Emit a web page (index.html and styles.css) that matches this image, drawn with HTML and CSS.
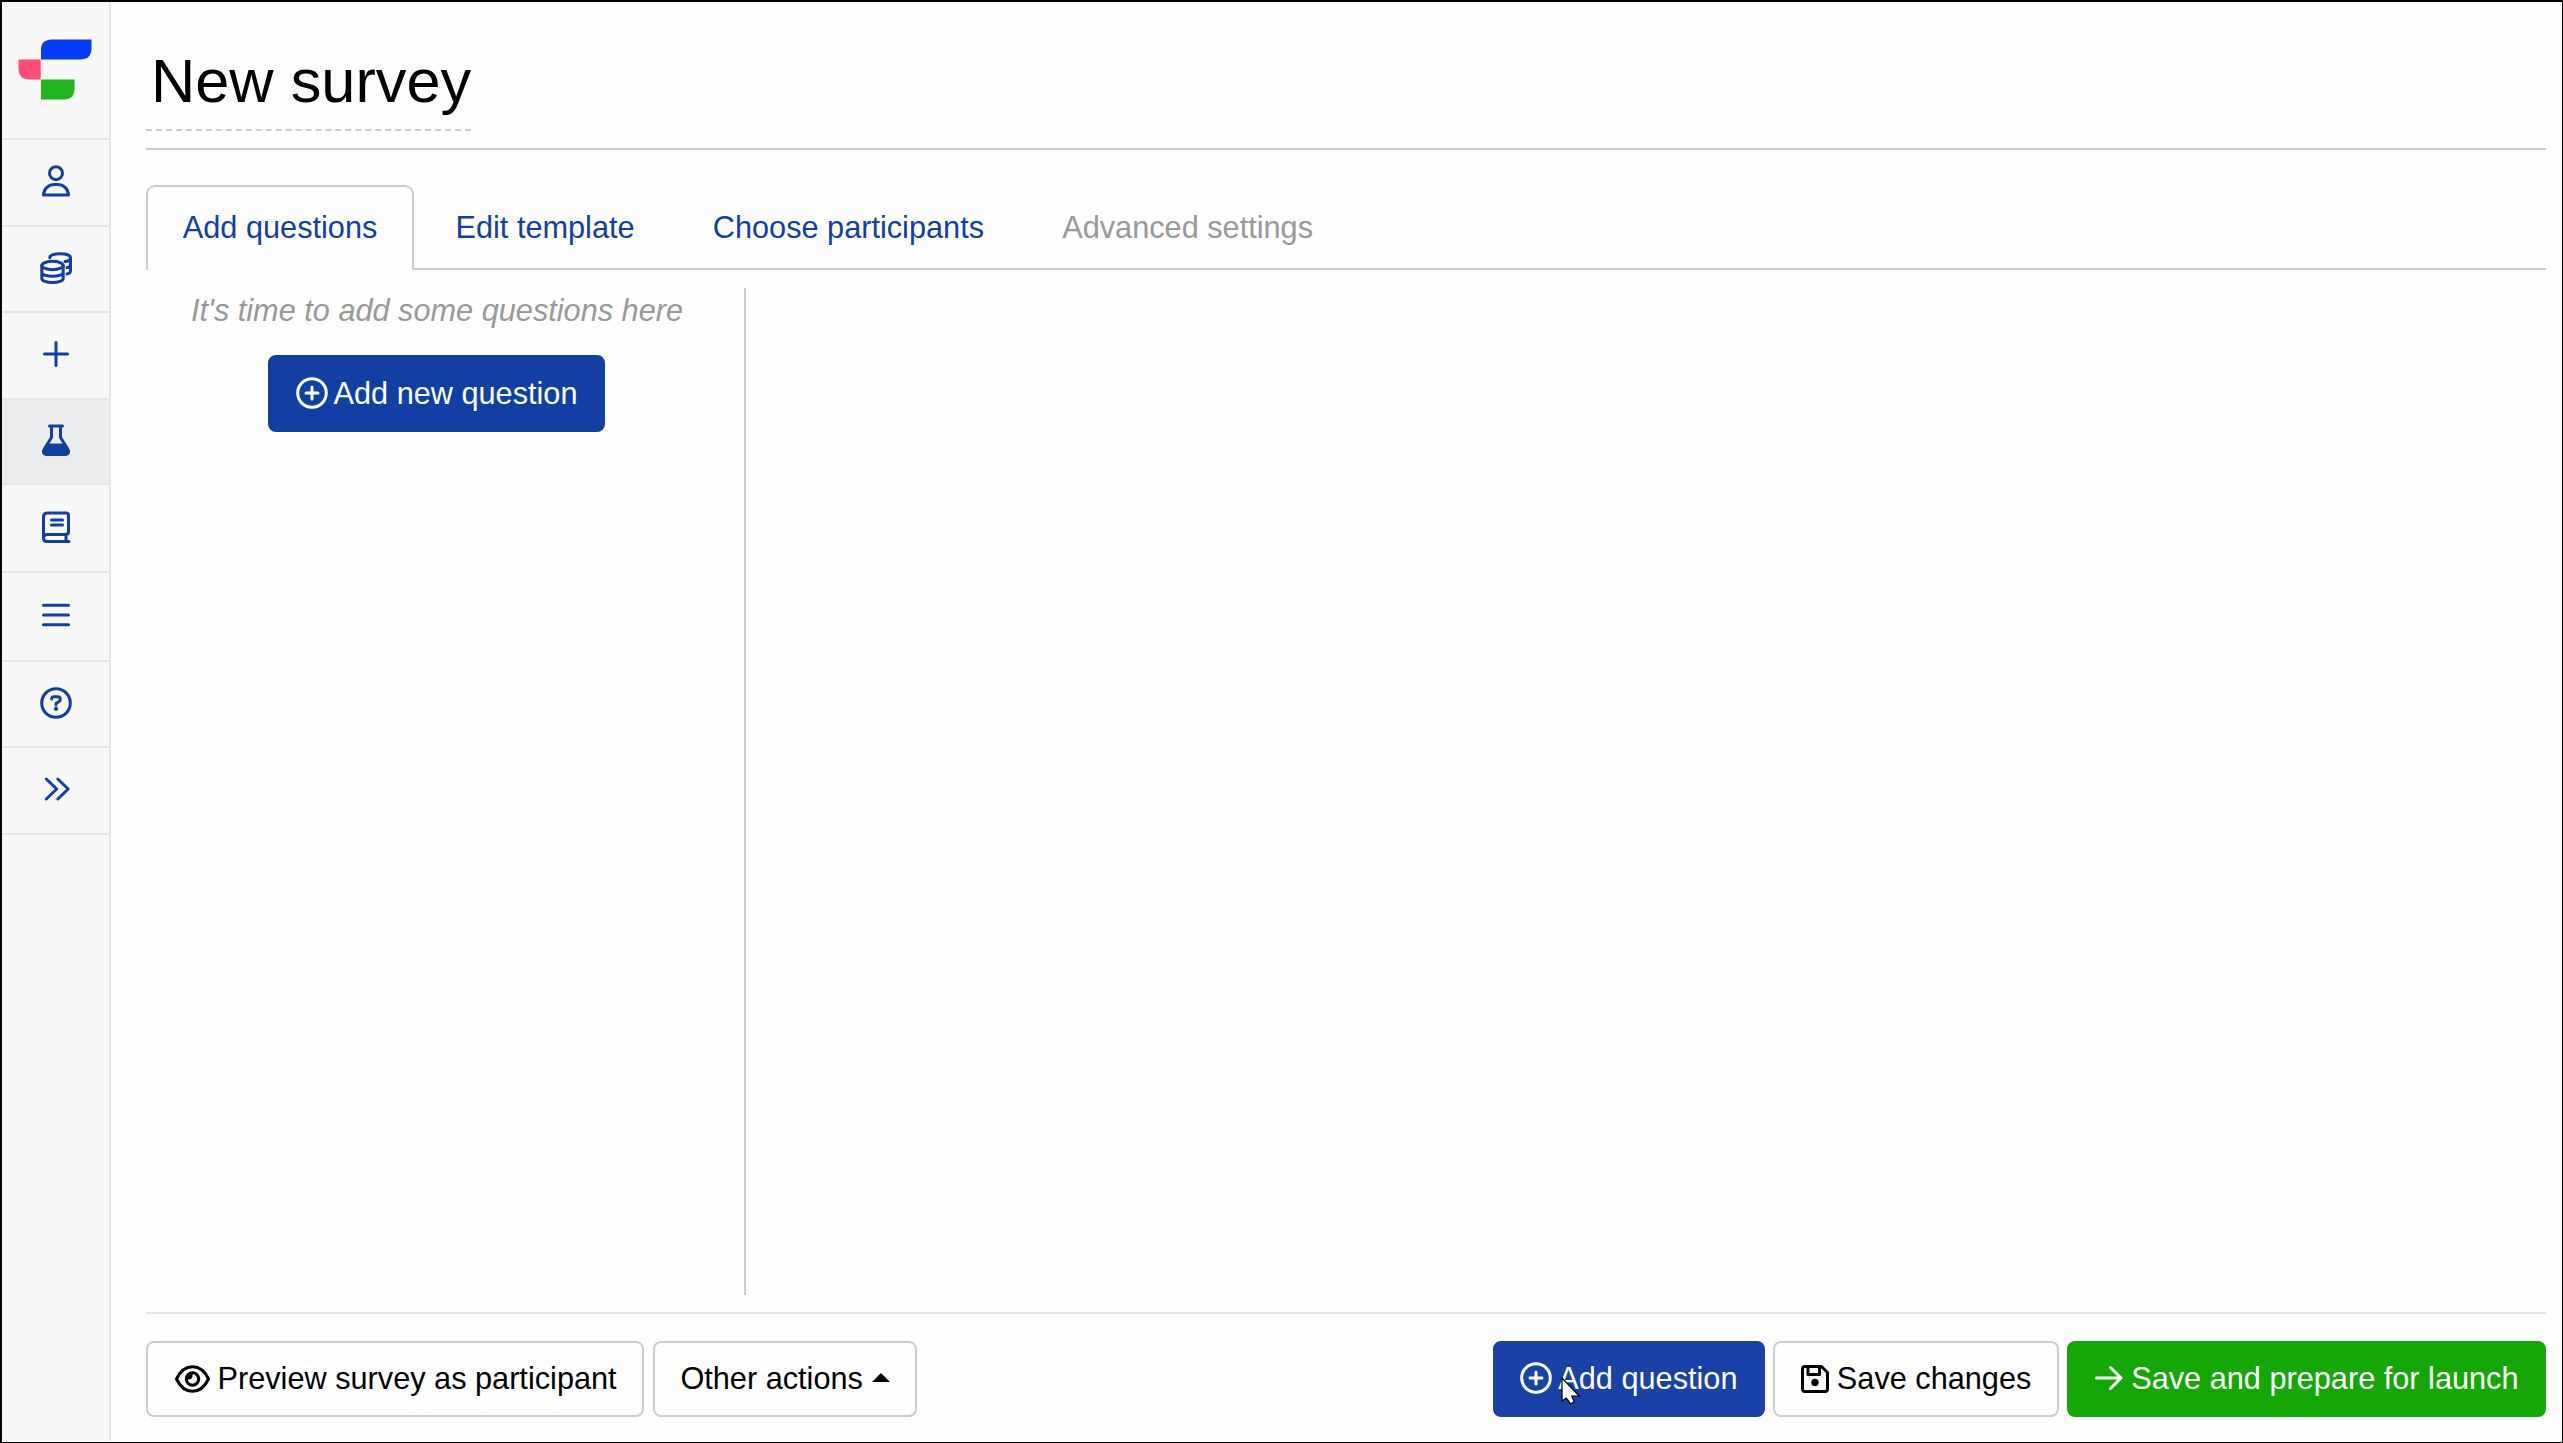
FILE: index.html
```html
<!DOCTYPE html>
<html lang="en">
<head>
<meta charset="utf-8">
<title>New survey</title>
<link rel="stylesheet" href="styles.css">
</head>
<body>
<div class="app">
  <nav class="sidebar">
    <a class="side-item logo">
      <svg width="74" height="62" viewBox="0 0 74 62">
        <path fill="#033cfa" d="M23 20.5V11Q23 .5 34 .5H73.500V9Q73.500 20.500 62 20.500Z"/>
        <path fill="#ff4c78" d="M.5 20.500H22.700V40.500H12Q.5 40.500 .5 29Z"/>
        <path fill="#1fb61c" d="M23 40.500H56.500V49Q56.500 60.500 46 60.500H23Z"/>
      </svg>
    </a>
    <a class="side-item user">
      <svg class="icon" viewBox="0 0 32 32"><circle cx="16" cy="8.200" r="6.500"/><path d="M3.500 30H28.500C28.500 23.500 23 19.500 17.500 19.500H14.500C9 19.500 3.500 23.500 3.500 30Z"/></svg>
    </a>
    <a class="side-item coins">
      <svg class="icon" viewBox="0 0 32 32"><ellipse cx="12.500" cy="13.500" rx="10.700" ry="4.200"/><path d="M1.800 13.500V26.500C1.800 28.800 6.600 30.500 12.500 30.500S23.200 28.800 23.200 26.500V13.500M1.800 20.200C1.800 22.500 6.600 24.200 12.500 24.200S23.200 22.500 23.200 20.200M9.800 5.700C9.800 3 14.500 1.700 20.300 1.700S30.500 3.200 30.500 5.600 28 9.500 25 9.500M30.500 5.600V19C30.500 20.800 29 21.600 27 22M30.500 12.500C30.500 14.200 29 15.200 27 15.600"/></svg>
    </a>
    <a class="side-item plus">
      <svg class="icon" viewBox="0 0 32 32"><path d="M16 4.500V27.500M4.500 16H27.500"/></svg>
    </a>
    <a class="side-item flask active">
      <svg class="icon" viewBox="0 0 32 32"><path d="M9.500 2H22.500M11.500 2V13.500L4 25.500C2.500 28 3.500 30.500 6.500 30.500H25.500C28.500 30.500 29.500 28 28 25.500L20.500 13.500V2"/><path class="solid" d="M8 19.500H24L29 28L27 31H5L3 28Z"/></svg>
    </a>
    <a class="side-item book">
      <svg class="icon" viewBox="0 0 32 32"><path d="M29 30.500H7Q3.500 30.500 3.500 27V6Q3.500 2 7.500 2H26Q28.500 2 28.500 4.500V21Q28.500 23.500 26 23.500H7Q3.500 23.500 3.500 27M26 24V30"/><path d="M11.500 9H22.500M11.500 14H22.500"/></svg>
    </a>
    <a class="side-item bars">
      <svg class="icon" viewBox="0 0 32 32"><path d="M3.500 6.300H28.500M3.500 16H28.500M3.500 25.700H28.500"/></svg>
    </a>
    <a class="side-item help">
      <svg class="icon" viewBox="0 0 32 32"><circle cx="16" cy="16" r="14.300"/><path d="M11.700 12Q11.700 9.700 14 9.700H17.500Q20.300 9.700 20.300 12.300Q20.300 14 18.500 15L16 16.500V18"/><circle class="dot" cx="16" cy="21.800" r="2.100"/></svg>
    </a>
    <a class="side-item expand">
      <svg class="icon" viewBox="0 0 32 32"><path d="M6.300 6L16.700 16L6.300 26M17.800 6L28.200 16L17.800 26"/></svg>
    </a>
  </nav>

  <main class="main">
    <header class="page-head"><h1 class="title">New survey</h1></header>

    <div class="tabs">
      <a class="tab current">Add questions</a>
      <a class="tab">Edit template</a>
      <a class="tab">Choose participants</a>
      <a class="tab disabled">Advanced settings</a>
    </div>

    <section class="workspace">
      <aside class="question-list">
        <p class="hint">It's time to add some questions here</p>
        <button class="btn primary add-new">
          <svg class="btn-icon round" viewBox="0 0 32 32"><circle cx="16" cy="16" r="14.300"/><path d="M16 10V22M10 16H22"/></svg>Add new question
        </button>
      </aside>
      <div class="editor"></div>
    </section>

    <footer class="actions">
      <div class="group">
        <button class="btn preview">
          <svg class="btn-icon eye" viewBox="0 0 35 28"><path d="M1.500 14C5 6.500 11 1.800 17.500 1.800S30 6.500 33.500 14C30 21.500 24 26.200 17.500 26.200S5 21.500 1.500 14Z"/><circle cx="17.500" cy="14" r="6.200"/><path class="solid" d="M17.500 7.500V10.500Q17.500 14.500 13.500 14.500H11.500Q11.500 8 17.500 7.500Z"/></svg>Preview survey as participant
        </button>
        <button class="btn other">Other actions<span class="caret"></span></button>
      </div>
      <div class="group end">
        <button class="btn primary hovered">
          <svg class="btn-icon round" viewBox="0 0 32 32"><circle cx="16" cy="16" r="14.300"/><path d="M16 10V22M10 16H22"/></svg>Add question
          <svg class="cursor" width="20" height="28" viewBox="0 0 20 28"><path fill="#fff" stroke="#000" stroke-width="1.200" d="M1 1V24L5.300 21L9.500 26.700L13.300 25L10.800 19H18.300Z"/></svg>
        </button>
        <button class="btn save">
          <svg class="btn-icon disk" viewBox="0 0 28 28"><path d="M1.500 4Q1.500 1.500 4 1.500H20.500L26.500 7.500V24Q26.500 26.500 24 26.500H4Q1.500 26.500 1.500 24ZM7 2V9.500H18.500V2"/><circle class="dot" cx="14" cy="17.500" r="3.700"/></svg>Save changes
        </button>
        <button class="btn launch">
          <svg class="btn-icon arrow" viewBox="0 0 28 28"><path d="M1.500 14H26M15.500 3.500L26 14L15.500 24.500"/></svg>Save and prepare for launch
        </button>
      </div>
    </footer>
  </main>
</div>
</body>
</html>
```
FILE: styles.css
```css
* { box-sizing: border-box; }

body {
  margin: 0;
  background: #fefefe;
  color: #000;
  font: 30.7px/36px "Liberation Sans", Arial, sans-serif;
}

.app {
  display: flex;
  width: 2563px;
  height: 1443px;
  border: solid #000;
  border-width: 2px 1px 1px 2px;
  overflow: hidden;
}

.sidebar {
  flex: none;
  display: flex;
  flex-direction: column;
  width: 109px;
  background: #f8f8f8;
  border-right: 2px solid #e6e6e6;
}

.side-item {
  display: flex;
  align-items: center;
  justify-content: center;
  height: 87px;
  padding-bottom: 3px;
  border-bottom: 2px solid #e6e6e6;
  color: #113fa3;
}
.side-item.logo { height: 138px; padding: 0 1px 0 0; }
.side-item.coins, .side-item.help { height: 86px; }
.side-item.coins { padding-bottom: 2px; }
.side-item.flask { height: 85px; }
.side-item.book { height: 88px; }
.side-item.bars { height: 89px; }
.side-item.active { background: #ecedee; }

.icon {
  width: 32px;
  height: 32px;
  fill: none;
  stroke: currentColor;
  stroke-width: 3;
  stroke-linecap: round;
  stroke-linejoin: round;
}
.solid, .dot { fill: currentColor; stroke: none; }

.main {
  flex: 1;
  display: flex;
  flex-direction: column;
  padding: 0 16px 24px 35px;
}

.page-head {
  display: flex;
  align-items: flex-start;
  height: 148px;
  padding-top: 33px;
  border-bottom: 2px solid #ccc;
}
.title {
  margin: 0;
  padding: 0 0 0 5px;
  height: 96px;
  border-bottom: 2px dashed #ccc;
  font-size: 61.3px;
  font-weight: 400;
  line-height: 92px;
}

.tabs {
  display: flex;
  gap: 4.6px;
  height: 120px;
  padding-top: 35px;
  border-bottom: 2px solid #ccc;
}
.tab {
  height: 85px;
  padding: 23px 34.8px 0;
  border: 2px solid transparent;
  border-bottom: 0;
  color: #113fa3;
  white-space: nowrap;
}
.tab.current {
  background: #fefefe;
  border-color: #ccc;
  border-radius: 9px 9px 0 0;
}
.tab.disabled { color: #999; }

.workspace {
  display: flex;
  height: 1007px;
  margin: 18px 0 17px;
}
.question-list {
  display: flex;
  flex-direction: column;
  align-items: center;
  width: 600px;
  padding-right: 17px;
  border-right: 2px solid #ccc;
}
.hint {
  margin: 5px 0 26px;
  padding-left: 1px;
  color: #999;
  font-style: italic;
}
.editor { flex: 1; }

.btn {
  position: relative;
  display: flex;
  align-items: center;
  height: 76px;
  padding: 0 25.500px;
  border: 2px solid #ccc;
  border-radius: 8px;
  background: #fefefe;
  color: #000;
  font: inherit;
  white-space: nowrap;
}
.btn.primary { background: #113fa3; border-color: #113fa3; color: #fff; }
.btn.primary.hovered { background: #1842a8; border-color: #1842a8; }
.btn.launch { background: #15a705; border-color: #15a705; color: #fff; }
.btn.add-new { height: 77px; }
.btn.preview { padding-left: 26.5px; }
.btn.other { padding: 0 25px; }

.btn-icon {
  flex: none;
  fill: none;
  stroke: currentColor;
  stroke-width: 3;
  stroke-linecap: round;
  stroke-linejoin: round;
}
.btn-icon.round { width: 32px; height: 32px; margin: 0 6px 2px 0; }
.btn-icon.eye { width: 35px; height: 28px; margin: 0 8px 1px 0; }
.btn-icon.disk { width: 28px; height: 28px; margin: 0 8px 1px 0; }
.btn-icon.arrow { width: 28px; height: 28px; margin: 0 8.5px 3px 0; }

.caret {
  margin: -4px 0 0 9px;
  border: 9px solid transparent;
  border-top: 0;
  border-bottom-color: #000;
}

.actions {
  display: flex;
  justify-content: space-between;
  height: 105px;
  padding-top: 27px;
  border-top: 2px solid #e3e3e3;
}
.group { display: flex; gap: 9.3px; }
.group.end { gap: 8.4px; }

.cursor {
  position: absolute;
  left: 66px;
  top: 34px;
}
```
